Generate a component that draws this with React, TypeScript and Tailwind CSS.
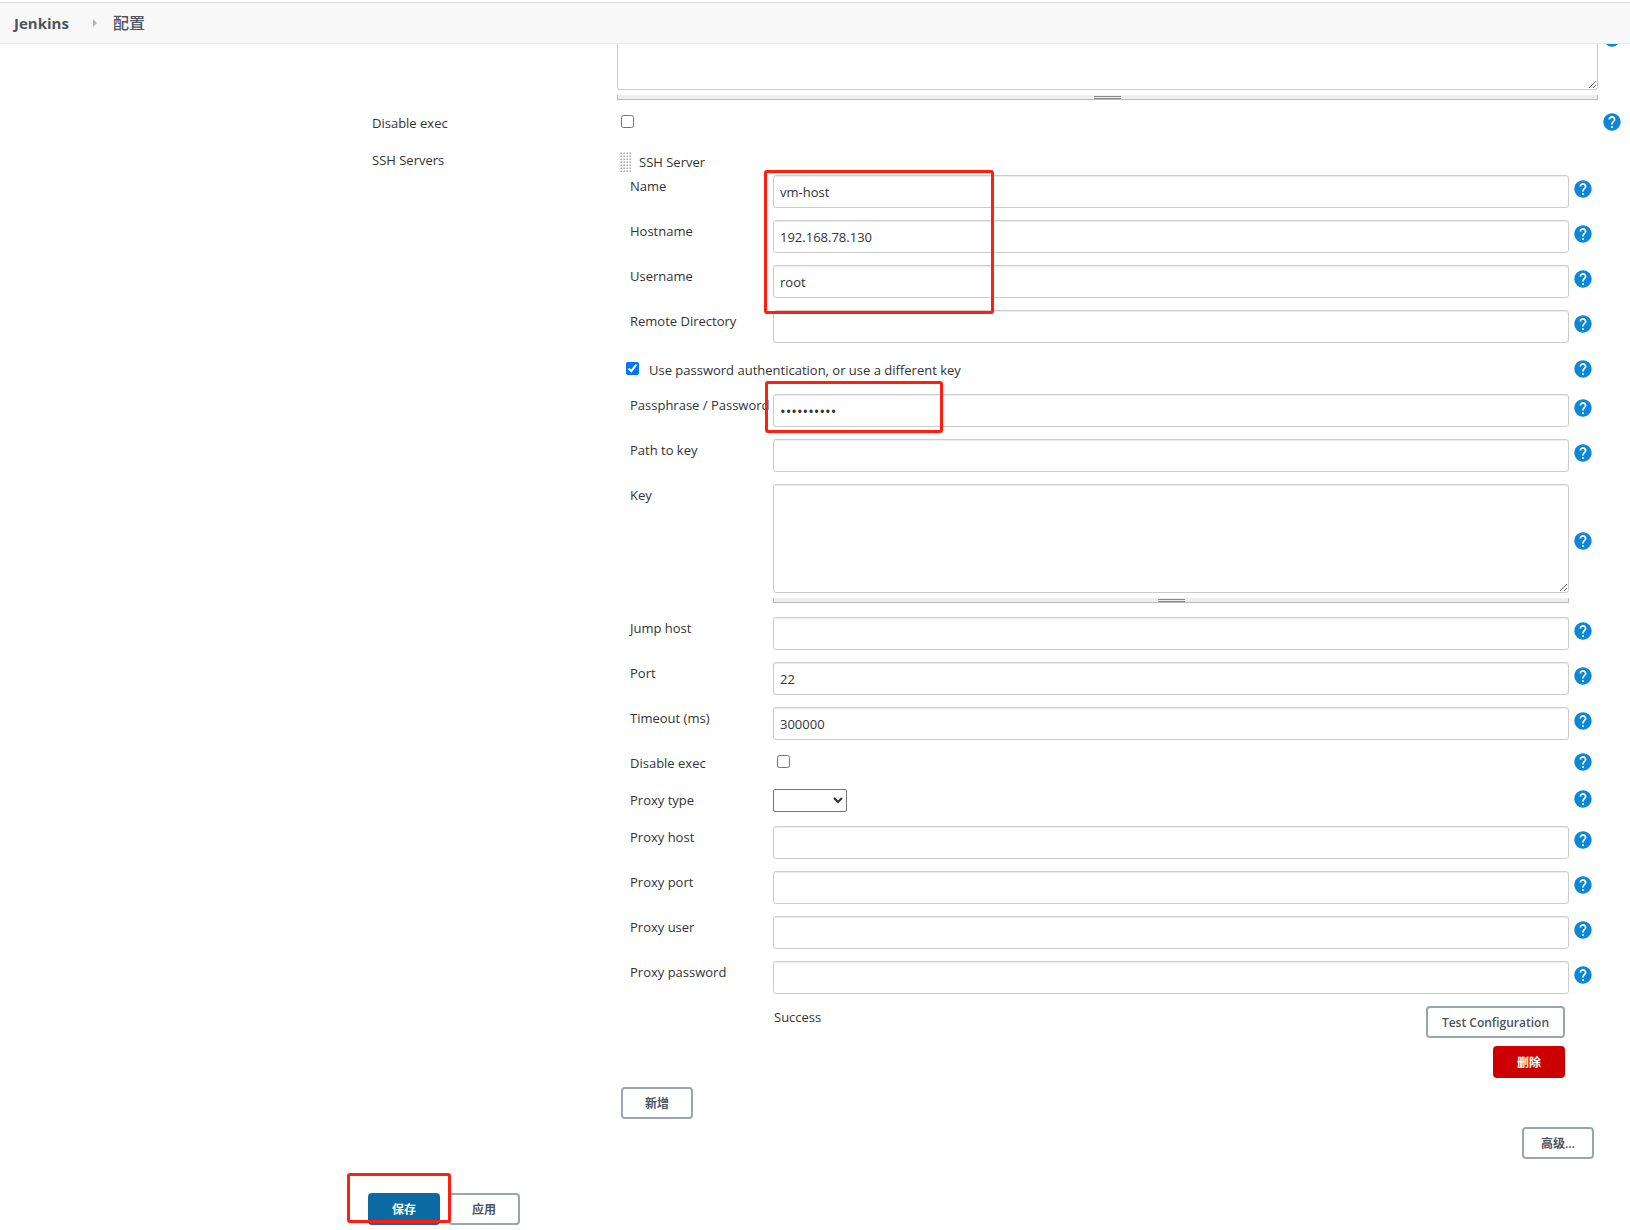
import * as React from "react";
import clsx from "clsx";

/* --------------------------------------------------------------------------
   Small building blocks
-------------------------------------------------------------------------- */

function HelpIcon() {
  return (
    <svg viewBox="1.6 1.6 20.8 20.8" className="size-[18px] shrink-0 fill-[#0b87d6]" aria-hidden="true">
      <path d="M12 2C6.48 2 2 6.48 2 12s4.48 10 10 10 10-4.48 10-10S17.52 2 12 2zm1 17h-2v-2h2v2zm2.07-7.75l-.9.92C13.45 12.9 13 13.5 13 15h-2v-.5c0-1.1.45-2.1 1.17-2.83l1.24-1.26c.37-.36.59-.86.59-1.41 0-1.1-.9-2-2-2s-2 .9-2 2H8c0-2.21 1.79-4 4-4s4 1.79 4 4c0 .88-.36 1.68-.93 2.25z" />
    </svg>
  );
}

function Help({ topic, className }: { topic: string; className?: string }) {
  return (
    <div className={clsx("flex w-[29px] shrink-0 pl-[5px]", className)}>
      <button type="button" aria-label={`Help for ${topic}`} className="block h-[18px] cursor-pointer">
        <HelpIcon />
      </button>
    </div>
  );
}

function ResizeHandle() {
  return (
    <div className="mt-[5px] flex h-[5px] cursor-s-resize justify-center border-x border-b border-[#bbb] bg-[#eee]">
      <span className="mt-px h-[3px] w-[27px] border-y border-[#888]" />
    </div>
  );
}

const fieldClass =
  "block w-full border border-[#ccc] bg-white px-1.5 text-[#333] shadow-[inset_0_1px_1px_rgba(0,0,0,0.075)] outline-none focus:border-[#5c9ccc]";

function Row({
  id,
  label,
  helpClass = "pt-[5px]",
  children,
}: {
  id: string;
  label: string;
  helpClass?: string;
  children: React.ReactNode;
}) {
  return (
    <div className="flex">
      <label htmlFor={id} className="w-[143px] shrink-0 whitespace-nowrap">
        {label}
      </label>
      <div className="min-w-0 flex-1">{children}</div>
      <Help topic={label} className={helpClass} />
    </div>
  );
}

function TextRow({
  id,
  label,
  value = "",
  type = "text",
}: {
  id: string;
  label: string;
  value?: string;
  type?: string;
}) {
  return (
    <Row id={id} label={label}>
      <input
        id={id}
        type={type}
        defaultValue={value}
        autoComplete="off"
        className={clsx(fieldClass, "mb-3 h-[33px] rounded-[3px]", type === "password" && "text-[15px]")}
      />
    </Row>
  );
}

const buttonStyles = {
  plain: "border-[#9aa6ae] bg-white text-[#4d545d]",
  danger: "border-[#cc0000] bg-[#cc0000] text-white",
  primary: "border-[#0b6aa2] bg-[#0b6aa2] text-white",
};

function Button({
  kind = "plain",
  children,
}: {
  kind?: keyof typeof buttonStyles;
  children: React.ReactNode;
}) {
  return (
    <button
      type="button"
      className={clsx(
        "h-8 min-w-[72px] cursor-pointer rounded border-2 px-3.5 pt-0.5 text-[12px] leading-4 font-semibold",
        buttonStyles[kind]
      )}
    >
      {children}
    </button>
  );
}

/* Red frame laid over the fields that need attention */
function Marker({ className }: { className: string }) {
  return (
    <span
      className={clsx("pointer-events-none absolute z-10 rounded-[3px] border-3 border-[#ff1e10]", className)}
      aria-hidden="true"
    />
  );
}

/* --------------------------------------------------------------------------
   SSH server entry
-------------------------------------------------------------------------- */

function DragGrip() {
  return (
    <svg width="11" height="20" className="shrink-0 cursor-move" aria-hidden="true">
      <defs>
        <pattern id="grip" width="3" height="3" patternUnits="userSpaceOnUse">
          <rect width="2" height="2" fill="#ccc" />
          <rect width="1" height="1" fill="#eee" />
          <rect x="1" y="1" width="1" height="1" fill="#aaa" />
        </pattern>
      </defs>
      <rect width="11" height="20" fill="url(#grip)" />
    </svg>
  );
}

function SshServer() {
  return (
    <section>
      <div className="flex h-[26px] items-center gap-2 pl-[3px]">
        <DragGrip />
        <span>SSH Server</span>
      </div>

      <div className="relative pl-[13px]">
        <Marker className="-top-[5px] left-[147px] h-36 w-[230px]" />
        <TextRow id="name" label="Name" value="vm-host" />
        <TextRow id="hostname" label="Hostname" value="192.168.78.130" />
        <TextRow id="username" label="Username" value="root" />
        <TextRow id="remote-dir" label="Remote Directory" />
      </div>

      <div className="flex h-[39px] pt-1 pl-[9px]">
        <input id="use-password" type="checkbox" defaultChecked className="mt-[3px] size-[13px]" />
        <label htmlFor="use-password" className="flex-1 pl-2.5">
          Use password authentication, or use a different key
        </label>
        <Help topic="password authentication" className="pt-px" />
      </div>

      <div className="relative pl-[13px]">
        <Marker className="-top-[13px] left-[148px] h-[52px] w-[178px]" />
        <TextRow id="passphrase" label="Passphrase / Password" type="password" value="jenkins123" />
        <TextRow id="key-path" label="Path to key" />
        <Row id="key" label="Key" helpClass="items-center pb-1.5">
          <textarea id="key" className={clsx(fieldClass, "h-[109px] resize rounded-[3px]")} />
          <ResizeHandle />
        </Row>
        <div className="mt-3.5">
          <TextRow id="jump-host" label="Jump host" />
          <TextRow id="port" label="Port" value="22" />
          <TextRow id="timeout" label="Timeout (ms)" value="300000" />
        </div>
        <Row id="server-disable-exec" label="Disable exec" helpClass="pt-px">
          <div className="flex h-[37px] pt-[3px] pl-1">
            <input id="server-disable-exec" type="checkbox" className="size-[13px]" />
          </div>
        </Row>
        <Row id="proxy-type" label="Proxy type" helpClass="pt-px">
          <select
            id="proxy-type"
            className="mb-3.5 block h-[23px] w-[74px] rounded-[2px] border border-[#767676] bg-white"
          >
            <option></option>
            <option>HTTP</option>
            <option>SOCKS 4</option>
            <option>SOCKS 5</option>
          </select>
        </Row>
        <TextRow id="proxy-host" label="Proxy host" />
        <TextRow id="proxy-port" label="Proxy port" />
        <TextRow id="proxy-user" label="Proxy user" />
        <TextRow id="proxy-password" label="Proxy password" type="password" />

        <div className="mr-[33px] ml-36 flex items-start justify-between">
          <span>Success</span>
          <Button>Test Configuration</Button>
        </div>
        <div className="mt-2 mr-[33px] flex justify-end">
          <Button kind="danger">删除</Button>
        </div>
      </div>
    </section>
  );
}

export default function App() {
  return (
    <div className="min-h-screen bg-white font-['Open_Sans','Noto_Sans_CJK_SC',sans-serif] text-[13px] leading-[22px] text-[#333]">
      <div className="pt-0.5">
        <nav className="flex h-[42px] items-center border-t border-b border-t-[#ddd] border-b-[#eaeaea] bg-[#f8f8f8] px-3.5 text-[#4d545d]">
          <a href="#" className="text-[15px] font-bold">
            Jenkins
          </a>
          <svg width="4" height="8" className="mr-4 ml-6 fill-[#b5b5b5]" aria-hidden="true">
            <path d="M0 0l4 4-4 4z" />
          </svg>
          <a href="#" className="text-[16px] font-medium">
            配置
          </a>
        </nav>
      </div>

      <form className="pr-[3px] pl-[372px]">
        <div className="flex">
          <div className="w-[245px] shrink-0" />
          <div className="min-w-0 flex-1">
            <textarea
              aria-label="Key"
              className="block h-[46px] w-full resize rounded-b-[3px] border border-t-0 border-[#ccc] bg-white px-1.5 outline-none"
            />
            <ResizeHandle />
          </div>
          <div className="flex h-[3px] w-[29px] items-end overflow-hidden pl-[5px]">
            <HelpIcon />
          </div>
        </div>

        <div className="mt-3 flex h-[37px]">
          <label htmlFor="disable-exec" className="w-[245px] shrink-0">
            Disable exec
          </label>
          <div className="flex flex-1 pt-[3px] pl-1">
            <input id="disable-exec" type="checkbox" className="size-[13px]" />
          </div>
          <Help topic="Disable exec" className="pt-px" />
        </div>

        <div className="flex">
          <div className="w-[245px] shrink-0">SSH Servers</div>
          <div className="min-w-0 flex-1">
            <SshServer />
            <div className="mt-[9px] pl-1">
              <Button>新增</Button>
            </div>
            <div className="mt-2 flex justify-end pr-1">
              <Button>高级...</Button>
            </div>
          </div>
          <div className="w-[29px] shrink-0" />
        </div>

        <div className="relative mt-[34px] -ml-1 flex gap-2">
          <Button kind="primary">保存</Button>
          <Button>应用</Button>
          <Marker className="-top-5 -left-[21px] h-[50px] w-[104px]" />
        </div>
      </form>
    </div>
  );
}
